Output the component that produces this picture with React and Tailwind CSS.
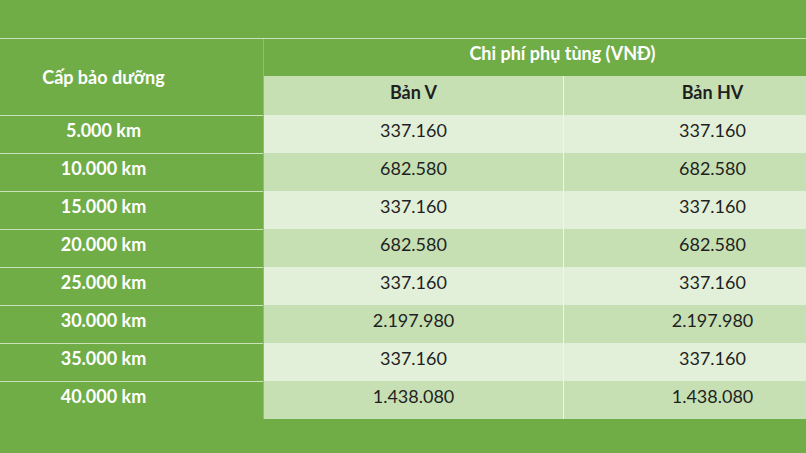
const rows = [
  ['5.000 km', '337.160', '337.160'],
  ['10.000 km', '682.580', '682.580'],
  ['15.000 km', '337.160', '337.160'],
  ['20.000 km', '682.580', '682.580'],
  ['25.000 km', '337.160', '337.160'],
  ['30.000 km', '2.197.980', '2.197.980'],
  ['35.000 km', '337.160', '337.160'],
  ['40.000 km', '1.438.080', '1.438.080'],
]

export default function App() {
  return (
    <div
      className="h-[453px] w-[806px] overflow-hidden bg-[#70ad47]"
      style={{ fontFamily: 'Lato, "Open Sans", sans-serif' }}
    >
      <div className="h-[38px]" />
      <div className="h-px w-full bg-[#c9e2b8]" />
      {/* table is wider than the frame: cropped on both sides */}
      <div className="grid w-[861px] grid-cols-[263px_1px_299px_1px_297px] text-[18px]">
        <div className="row-span-2 flex h-[76px] items-center justify-center pr-[56px] font-bold text-white">
          Cấp bảo dưỡng
        </div>
        <div className="row-span-2 bg-[#8cc268]" />
        <div className="col-span-3 flex h-[37px] items-center justify-center pb-2 font-bold text-white">
          Chi phí phụ tùng (VNĐ)
        </div>
        <div className="flex h-[39px] items-center justify-center bg-[#c6e0b4] pb-[7px] font-bold text-[#1f1f1f]">
          Bản V
        </div>
        <div className="bg-[#eef6e8]" />
        <div className="flex h-[39px] items-center justify-center bg-[#c6e0b4] pb-[7px] font-bold text-[#1f1f1f]">
          Bản HV
        </div>

        {rows.map(([level, v, hv], i) => {
          const bg = i % 2 === 0 ? 'bg-[#e2efd9]' : 'bg-[#c6e0b4]'
          return (
            <div key={level} className="contents">
              <div className="flex h-[38px] items-center justify-center border-t border-[#c9e2b8] pr-[56px] pb-2 font-bold text-white">
                {level}
              </div>
              <div className="bg-[#8cc268]" />
              <div className={`flex h-[38px] items-center justify-center pb-2 ${bg} text-[#1f1f1f]`}>{v}</div>
              <div className="bg-[#eef6e8]" />
              <div className={`flex h-[38px] items-center justify-center pb-2 ${bg} text-[#1f1f1f]`}>{hv}</div>
            </div>
          )
        })}
      </div>
    </div>
  )
}
